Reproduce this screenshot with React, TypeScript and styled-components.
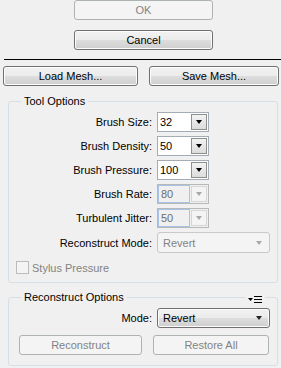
import React from 'react';
import styled, { createGlobalStyle, css } from 'styled-components';

const GlobalStyle = createGlobalStyle`
  html, body {
    margin: 0;
    padding: 0;
    background: #f0f0f0;
  }
  body {
    font-family: 'Liberation Sans', Arial, sans-serif;
    font-size: 11px;
    color: #000;
  }
`;

const Panel = styled.div`
  width: 281px;
  height: 368px;
  overflow: hidden;
  display: flex;
  flex-direction: column;
`;

const DialogButtons = styled.div`
  display: flex;
  flex-direction: column;
  gap: 10px;
  padding-left: 74px;
`;

const Button = styled.button<{ $disabled?: boolean; $width: number }>`
  box-sizing: border-box;
  width: ${(p) => p.$width}px;
  height: 20px;
  margin: 0;
  padding: 0;
  font-family: inherit;
  font-size: 11px;
  border-radius: 3px;
  ${(p) =>
    p.$disabled
      ? css`
          border: 1px solid #adb2b5;
          background: #f4f4f4;
          color: #838383;
        `
      : css`
          border: 1px solid #707070;
          background: linear-gradient(#f2f2f2 0%, #ebebeb 50%, #dddddd 51%, #cfcfcf 100%);
          box-shadow: inset 0 0 0 1px #fcfcfc;
          color: #000;
        `}
`;

const Separator = styled.div`
  margin: 9px 0 0 4px;
  height: 1px;
  background: #000;
`;

const MeshRow = styled.div`
  display: flex;
  gap: 11px;
  padding: 6px 0 0 3px;
`;

const Group = styled.fieldset<{ $height: number }>`
  box-sizing: border-box;
  position: relative;
  margin: 0 3px 0 8px;
  padding: 0;
  height: ${(p) => p.$height}px;
  border: 1px solid #d5dfe5;
  border-radius: 3px;
  min-inline-size: 0;
`;

const Legend = styled.legend`
  margin-left: 12px;
  padding: 0 3px;
  line-height: 13px;
  font-size: 11px;
  color: #000;
`;

const Rows = styled.div`
  display: grid;
  grid-template-columns: 143px auto;
  column-gap: 5px;
  row-gap: 4px;
  align-items: center;
  padding-top: 4px;
`;

const Label = styled.div`
  text-align: right;
  white-space: nowrap;
`;

const Combo = styled.div<{ $disabled?: boolean }>`
  box-sizing: border-box;
  width: 52px;
  height: 20px;
  display: flex;
  align-items: stretch;
  background: ${(p) => (p.$disabled ? '#f0f0f0' : '#fff')};
  border: 1px solid ${(p) => (p.$disabled ? '#b8b8b8' : '#a5acb5')};
`;

const ComboText = styled.div<{ $disabled?: boolean }>`
  box-sizing: border-box;
  flex: 1;
  display: flex;
  align-items: center;
  padding-left: 2px;
  color: ${(p) => (p.$disabled ? '#6d6d6d' : '#000')};
  ${(p) => p.$disabled && css`border: 1px solid #a7c4e6;`}
`;

const ComboButton = styled.div<{ $disabled?: boolean }>`
  box-sizing: border-box;
  width: 16px;
  margin: 1px;
  display: flex;
  align-items: center;
  justify-content: center;
  border: 1px solid ${(p) => (p.$disabled ? '#d6d6d6' : '#8e8f8f')};
  background: ${(p) => (p.$disabled ? '#f4f4f4' : 'linear-gradient(#f3f3f3, #dcdcdc)')};
`;

const Arrow = styled.div<{ $color: string }>`
  width: 0;
  height: 0;
  border-left: 3.5px solid transparent;
  border-right: 3.5px solid transparent;
  border-top: 4px solid ${(p) => p.$color};
`;

const DropCombo = styled.div<{ $disabled?: boolean }>`
  box-sizing: border-box;
  width: 113px;
  height: ${(p) => (p.$disabled ? 21 : 20)}px;
  display: flex;
  align-items: center;
  justify-content: space-between;
  padding: 0 7px 0 5px;
  border-radius: 3px;
  ${(p) =>
    p.$disabled
      ? css`
          border: 1px solid #c9c9c9;
          background: #f4f4f4;
          color: #838383;
        `
      : css`
          border: 1px solid #707070;
          background: linear-gradient(#f2f2f2 0%, #ebebeb 50%, #dddddd 51%, #cfcfcf 100%);
          box-shadow: inset 0 0 0 1px #fcfcfc;
          color: #000;
        `}
`;

const CheckRow = styled.label`
  display: flex;
  align-items: center;
  gap: 3px;
  margin: 8px 0 0 7px;
  color: #838383;
`;

const CheckBox = styled.span`
  box-sizing: border-box;
  width: 13px;
  height: 13px;
  border: 1px solid #bcbcbc;
  background: #f4f4f4;
`;

const MenuIcon = styled.svg`
  position: absolute;
  top: -9px;
  right: 12px;
  padding: 0 2px;
  background: #f0f0f0;
`;

const ActionRow = styled.div`
  display: flex;
  gap: 11px;
  padding: 7px 0 0 10px;
`;

const StepperCombo: React.FC<{ value: string; disabled?: boolean }> = ({ value, disabled }) => (
  <Combo $disabled={disabled}>
    <ComboText $disabled={disabled}>{value}</ComboText>
    <ComboButton $disabled={disabled}>
      <Arrow $color={disabled ? '#a8a8a8' : '#000'} />
    </ComboButton>
  </Combo>
);

const ModeCombo: React.FC<{ value: string; disabled?: boolean }> = ({ value, disabled }) => (
  <DropCombo $disabled={disabled}>
    <span>{value}</span>
    <Arrow $color={disabled ? '#a8a8a8' : '#222'} />
  </DropCombo>
);

const toolRows = [
  { label: 'Brush Size:', value: '32' },
  { label: 'Brush Density:', value: '50' },
  { label: 'Brush Pressure:', value: '100' },
  { label: 'Brush Rate:', value: '80', disabled: true },
  { label: 'Turbulent Jitter:', value: '50', disabled: true },
];

export default function App() {
  return (
    <>
      <GlobalStyle />
      <Panel>
        <DialogButtons>
          <Button $disabled $width={139}>OK</Button>
          <Button $width={139}>Cancel</Button>
        </DialogButtons>
        <Separator />
        <MeshRow>
          <Button $width={135}>Load Mesh...</Button>
          <Button $width={130}>Save Mesh...</Button>
        </MeshRow>

        <Group $height={188} style={{ marginTop: 9 }}>
          <Legend>Tool Options</Legend>
          <Rows>
            {toolRows.map((row) => (
              <React.Fragment key={row.label}>
                <Label>{row.label}</Label>
                <StepperCombo value={row.value} disabled={row.disabled} />
              </React.Fragment>
            ))}
            <Label>Reconstruct Mode:</Label>
            <ModeCombo value="Revert" disabled />
          </Rows>
          <CheckRow>
            <CheckBox />
            Stylus Pressure
          </CheckRow>
        </Group>

        <Group $height={75} style={{ marginTop: 8 }}>
          <Legend>Reconstruct Options</Legend>
          <MenuIcon width="16" height="10" viewBox="0 0 16 10">
            <path d="M1 3h5l-2.5 3z" fill="#000" />
            <rect x="7" y="1" width="8" height="1" fill="#000" />
            <rect x="7" y="4" width="8" height="1" fill="#000" />
            <rect x="7" y="7" width="8" height="1" fill="#000" />
          </MenuIcon>
          <Rows>
            <Label>Mode:</Label>
            <ModeCombo value="Revert" />
          </Rows>
          <ActionRow>
            <Button $disabled $width={123}>Reconstruct</Button>
            <Button $disabled $width={116}>Restore All</Button>
          </ActionRow>
        </Group>
      </Panel>
    </>
  );
}
